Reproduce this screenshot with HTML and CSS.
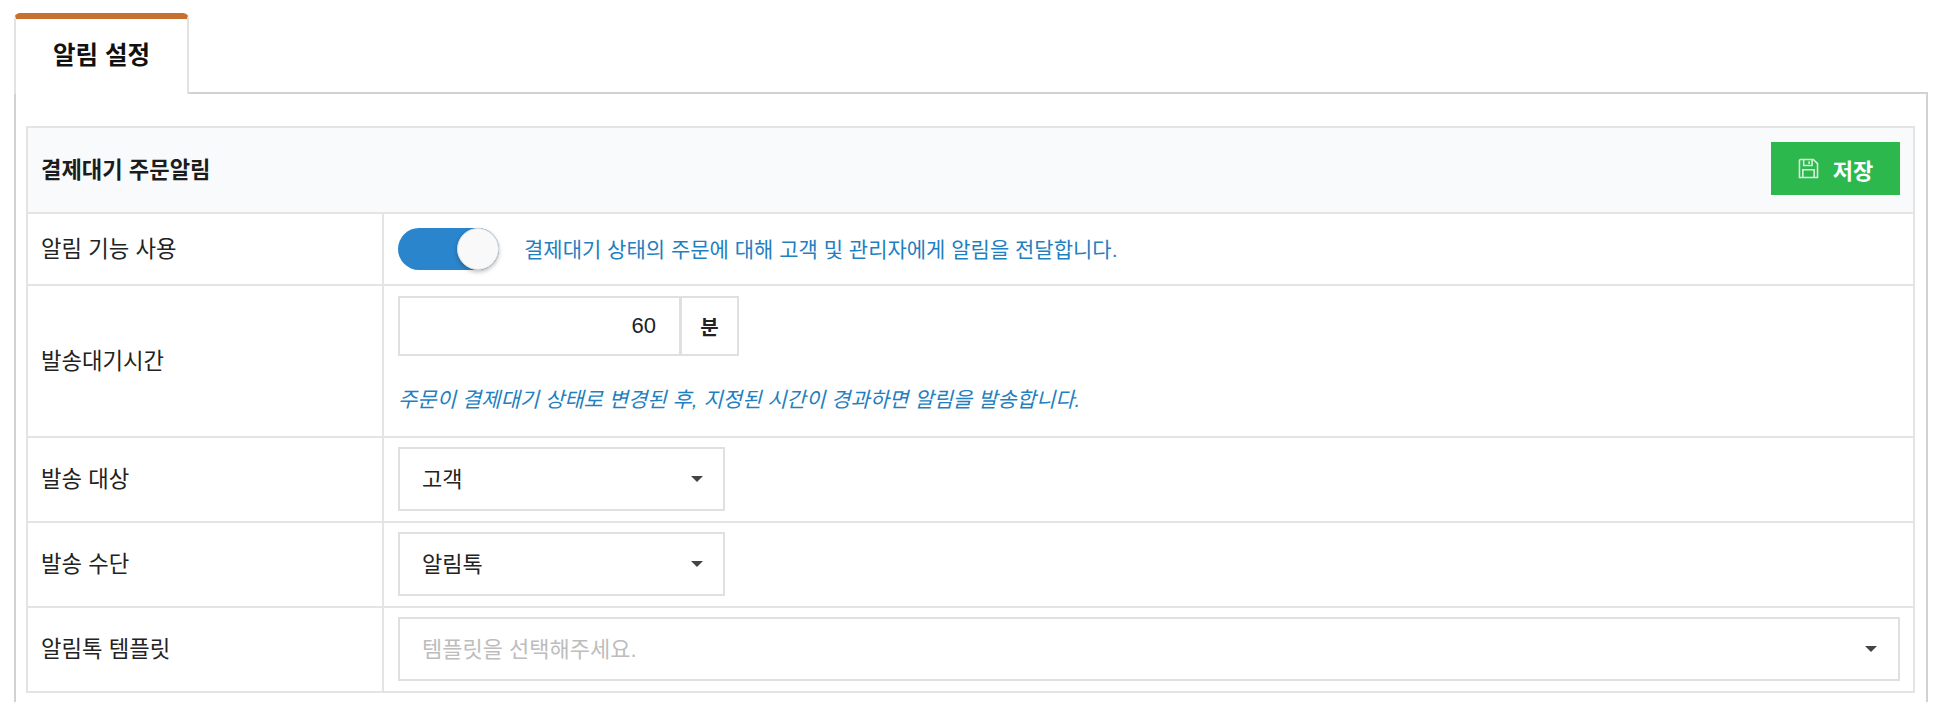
FILE: index.html
```html
<!DOCTYPE html>
<html lang="ko">
<head>
  <meta charset="UTF-8" />
  <meta name="viewport" content="width=device-width, initial-scale=1.0"/>
  <title>알림 설정</title>
  <link rel="stylesheet" href="styles.css">
</head>
<body>

<div class="tab">알림 설정</div>

<div class="panel">
  <table class="form-table">
    <colgroup>
      <col class="label-col" />
      <col />
    </colgroup>
    <tr class="head-row">
      <th colspan="2">
        <div class="head-inner">
          <span class="head-title">결제대기 주문알림</span>
          <button class="save-button">
            <svg class="save-icon" viewBox="0 0 20 20" fill="none" stroke="currentColor" stroke-width="1.5">
              <path d="M2.2 1.4H14.6L18.6 5.4V18.6H1.4V2.2Z"/>
              <path d="M5.4 1.4V7.2H13.4V1.4"/>
              <path d="M10.6 3.2V5.6"/>
              <path d="M4.6 18.6V11.2H15.4V18.6"/>
            </svg>
            저장
          </button>
        </div>
      </th>
    </tr>
    <tr class="toggle-row">
      <td class="label">알림 기능 사용</td>
      <td>
        <div class="toggle-line">
          <div class="toggle"><div class="knob"></div></div>
          <span class="help toggle-help">결제대기 상태의 주문에 대해 고객 및 관리자에게 알림을 전달합니다.</span>
        </div>
      </td>
    </tr>
    <tr>
      <td class="label">발송대기시간</td>
      <td>
        <div class="input-group">
          <input type="text" class="minutes" value="60" />
          <div class="addon">분</div>
        </div>
        <p class="help note">주문이 결제대기 상태로 변경된 후, 지정된 시간이 경과하면 알림을 발송합니다.</p>
      </td>
    </tr>
    <tr>
      <td class="label">발송 대상</td>
      <td><div class="select short"><span class="select-text">고객</span><i class="caret"></i></div></td>
    </tr>
    <tr>
      <td class="label">발송 수단</td>
      <td><div class="select short"><span class="select-text">알림톡</span><i class="caret"></i></div></td>
    </tr>
    <tr>
      <td class="label">알림톡 템플릿</td>
      <td><div class="select"><span class="select-text placeholder">템플릿을 선택해주세요.</span><i class="caret"></i></div></td>
    </tr>
  </table>
</div>

</body>
</html>
```

FILE: styles.css
```css
html, body {
  height: 702px;
  overflow: hidden;
}

body {
  display: flex;
  flex-direction: column;
  font-family: "Liberation Sans", "Noto Sans CJK KR", sans-serif;
  font-size: 22px;
  color: #222;
  margin: 0;
  padding: 13px 24px 0 14px;
  box-sizing: border-box;
  background: white;
}

.tab {
  position: relative;
  z-index: 1;
  flex: none;
  box-sizing: border-box;
  width: 175px;
  height: 81px;
  margin-bottom: -2px;
  padding-left: 37px;
  line-height: 73px;
  font-size: 24.5px;
  font-weight: bold;
  color: #111;
  background: white;
  border: 2px solid #e2e2e2;
  border-top: 6px solid #c8702f;
  border-bottom: none;
  border-radius: 6px 6px 0 0;
}

.panel {
  flex: 1;
  box-sizing: border-box;
  border: 2px solid #d2d2d2;
  border-bottom: none;
  padding: 32px 11px 0 10px;
}

.form-table {
  width: 100%;
  table-layout: fixed;
  border-collapse: collapse;
  border: 2px solid #e0e0e0;
}

.label-col {
  width: 356px;
}

.form-table th,
.form-table td {
  border: 2px solid #e4e4e4;
  padding: 9px 13px 10px 14px;
  text-align: left;
}

.form-table .label {
  font-size: 22.3px;
  font-weight: normal;
}

.form-table th {
  background: #f9fafc;
  padding: 14px 13px 17px 13px;
  font-size: 22.2px;
  font-weight: bold;
  color: #1c1c1c;
}

.head-inner {
  display: flex;
  justify-content: space-between;
  align-items: center;
}

.head-title {
  margin-bottom: 2px;
}

.form-table td.label {
  padding: 4px 13px 9px;
}

.save-button {
  display: flex;
  align-items: center;
  justify-content: center;
  gap: 14px;
  width: 129px;
  height: 53px;
  padding: 0;
  font-family: inherit;
  font-size: 22px;
  font-weight: bold;
  color: white;
  background: #2db84d;
  border: none;
  cursor: pointer;
}

.save-icon {
  width: 21px;
  height: 21px;
  opacity: 0.8;
}

.toggle-row td {
  padding-top: 14px;
  padding-bottom: 14px;
}

.toggle-line {
  display: flex;
  align-items: center;
  gap: 25px;
}

.toggle {
  display: flex;
  justify-content: flex-end;
  width: 101px;
  height: 42px;
  background: #2a85cc;
  border-radius: 21px;
}

.knob {
  width: 42px;
  height: 42px;
  box-sizing: border-box;
  background: #f9f9f9;
  border: 1px solid #dcdcdc;
  border-radius: 50%;
  box-shadow: 0 2px 4px rgba(0,0,0,0.25);
}

.help {
  font-size: 21px;
  color: #1f7fbf;
}

.toggle-help {
  margin-bottom: 2px;
}

.note {
  margin: 29px 0 11px;
  line-height: 30px;
  font-style: italic;
}

.input-group {
  display: flex;
  width: 341px;
  height: 60px;
  margin-top: 1px;
}

.minutes {
  box-sizing: border-box;
  width: 283px;
  height: 100%;
  padding: 0 23px 0 0;
  font-family: inherit;
  font-size: 22px;
  color: #222;
  text-align: right;
  background: white;
  border: 2px solid #e0e0e0;
  outline: none;
}

.addon {
  display: flex;
  justify-content: center;
  align-items: center;
  box-sizing: border-box;
  flex: 1;
  margin-left: -1px;
  font-size: 20px;
  font-weight: bold;
  border: 2px solid #e0e0e0;
}

.select {
  display: flex;
  justify-content: space-between;
  align-items: center;
  box-sizing: border-box;
  height: 64px;
  padding: 0 21px 0 22px;
  border: 2px solid #e0e0e0;
}

.select-text {
  margin-bottom: 5px;
}

.select.short {
  width: 327px;
  padding-right: 20px;
}

.placeholder {
  color: #bdbdbd;
}

.caret {
  width: 0;
  height: 0;
  border-left: 6px solid transparent;
  border-right: 6px solid transparent;
  border-top: 6px solid #444;
}
```
